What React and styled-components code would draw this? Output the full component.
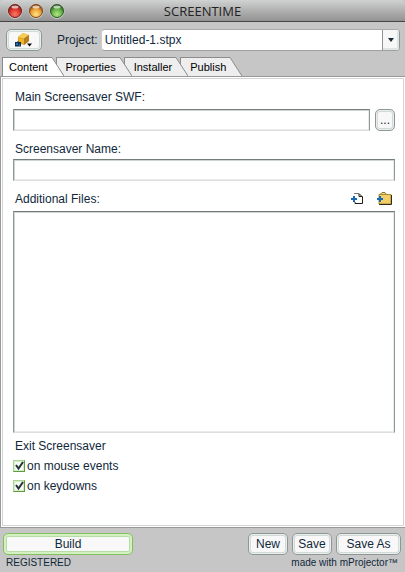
import React, { useState } from 'react';
import styled, { createGlobalStyle, css } from 'styled-components';

const GlobalStyle = createGlobalStyle`
  * {
    box-sizing: border-box;
  }

  body {
    margin: 0;
    background-color: #c6c6c6;
    color: #10283a;
    font-family: 'Liberation Sans', Arial, sans-serif;
    font-size: 12px;
    line-height: 16px;
  }

  button, input, select {
    font: inherit;
    color: inherit;
  }
`;

const Window = styled.main`
  display: flex;
  flex-direction: column;
  min-height: 100vh;
  background-color: #c6c6c6;
`;

const TitleBar = styled.header`
  display: grid;
  grid-template-columns: 1fr auto 1fr;
  align-items: center;
  height: 22px;
  padding: 0 7px;
  border-bottom: 1px solid #444;
  border-radius: 4px 4px 0 0;
  background: linear-gradient(#d0d3d2, #b4b4b4 45%, #929292);
`;

const Lights = styled.div`
  display: flex;
  gap: 5px;
`;

const Light = styled.button`
  display: flex;
  width: 16px;
  height: 16px;
  padding: 0;
  border: 0;
  background: none;
`;

const Title = styled.h1`
  margin: 0;
  color: #222;
  font-family: 'Open Sans', sans-serif;
  font-size: 13px;
  font-weight: 400;
  line-height: 20px;
`;

const Toolbar = styled.div`
  display: flex;
  align-items: center;
  height: 35px;
  padding: 0 5px 0 6px;
`;

const Button = styled.button`
  display: flex;
  align-items: center;
  justify-content: center;
  width: ${(props) => props.$width}px;
  height: 22px;
  padding: 0;
  border: 1px solid #8f9796;
  border-radius: 5px;
  background-color: #f8f8f8;
  box-shadow: inset 0 0 0 1px #e9edec, inset 0 0 0 2px #d3dbd9;

  ${(props) =>
    props.$primary &&
    css`
      border-color: #82bd60;
      box-shadow: inset 0 0 0 2px #d3f0c1, inset 0 0 0 3px #b9dba7;
    `}
`;

const ProjectLabel = styled.label`
  margin: 0 3px 0 15px;
`;

const Picker = styled.div`
  display: grid;
  grid-template-columns: 1fr 17px;
  flex: 1;
  height: 22px;
  border: 1px solid;
  border-color: #aaa #8f9594 #9da1a0 #ccc;
  border-radius: 4px;
  background: #fff;
  overflow: hidden;
`;

const ProjectSelect = styled.select`
  grid-area: 1 / 1 / 2 / 3;
  min-width: 0;
  padding: 0 20px 0 3px;
  border: 0;
  background: none;
  appearance: none;
`;

const PickerArrow = styled.span`
  display: flex;
  grid-area: 1 / 2 / 2 / 3;
  align-items: center;
  justify-content: center;
  border-left: 1px solid #8f9594;
  background: #f7f7f7;
  box-shadow: inset -1px -1px 0 1px #dfe5e3;
  pointer-events: none;
`;

const TabList = styled.div`
  display: flex;
  height: 19px;
  padding-left: 2px;
`;

const TabButton = styled.button`
  position: relative;
  z-index: ${(props) => props.$layer};
  display: flex;
  height: 19px;
  margin: 0 -8px 0 0;
  padding: 0;
  border: 0;
  background: none;
  color: #000;
  font-size: 11px;
`;

const TabText = styled.span`
  height: 19px;
  padding: 0 4px 0 ${(props) => (props.$first ? 6 : 9)}px;
  border: solid #8c8c8c;
  border-width: 1px 0 0 1px;
  background-color: ${(props) => (props.$active ? '#fff' : '#eee')};
  line-height: 18px;
`;

const Panel = styled.section`
  display: flex;
  flex: 1;
  flex-direction: column;
  padding: 1px;
  border: solid #999;
  border-width: 1px 0 1px 1px;
  background-color: #fff;
`;

const Form = styled.form`
  display: flex;
  flex: 1;
  flex-direction: column;
  padding: 10px 8px 29px 10px;
  border: 1px solid #d2d6d5;
`;

const FieldLabel = styled.label`
  padding: 0 2px;
`;

const FieldRow = styled.div`
  display: flex;
  gap: 5px;
  margin: ${(props) => (props.$tight ? 2 : 4)}px 0 10px;
`;

const sunken = css`
  border: 1px solid;
  border-color: #737d7a #8f9996 #dde0df #8f9996;
  border-radius: 0;
  background-color: #fff;
  box-shadow: inset 1px 1px 0 #cdd4d1, inset -1px -1px 0 #e8ebea;
  outline: 0;
`;

const TextInput = styled.input`
  flex: 1;
  min-width: 0;
  height: 22px;
  padding: 0 4px;
  ${sunken}
`;

const FilesHeader = styled.div`
  display: flex;
  align-items: center;
  justify-content: space-between;
  height: 16px;
  margin-bottom: 4px;
`;

const FileTools = styled.div`
  display: flex;
  gap: 12px;
  padding-right: 3px;
`;

const IconButton = styled.button`
  display: flex;
  padding: 0;
  border: 0;
  background: none;
`;

const FileList = styled.select`
  flex: 1;
  min-height: 120px;
  ${sunken}
`;

const ExitOptions = styled.fieldset`
  margin: 5px 0 0;
  padding: 0;
  border: 0;
`;

const Legend = styled.legend`
  padding: 0 2px 2px;
`;

const CheckLabel = styled.label`
  display: flex;
  align-items: center;
  gap: 2px;
  height: 20px;
`;

const CheckBox = styled.input`
  width: 12px;
  height: 12px;
  margin: 0;
  border: 1px solid;
  border-color: #a9d492 #5f9b42 #5f9b42 #a9d492;
  background-color: #f5faf2;
  box-shadow: inset 0 0 0 1px #d5ecc9;
  appearance: none;
`;

const CheckSlot = styled.span`
  display: grid;

  > * {
    grid-area: 1 / 1;
  }

  svg {
    display: none;
    pointer-events: none;
  }

  input:checked + svg {
    display: block;
  }
`;

const Footer = styled.footer`
  padding: 5px 4px 1px 3px;
`;

const Actions = styled.div`
  display: flex;
  justify-content: space-between;
`;

const ButtonGroup = styled.div`
  display: flex;
  gap: 4px;
`;

const Status = styled.div`
  display: flex;
  justify-content: space-between;
  padding: 0 3px;
  font-size: 10px;
`;

function LightIcon({ id, dark, color, glow }) {
  return (
    <svg width='16' height='16' viewBox='0 0 16 16'>
      <defs>
        <radialGradient id={id} cx='50%' cy='75%' r='70%'>
          <stop offset='0' stopColor={glow} />
          <stop offset='0.55' stopColor={color} />
          <stop offset='1' stopColor={dark} />
        </radialGradient>
      </defs>
      <circle cx='8' cy='8.5' r='7.5' fill='#c8c8c8' />
      <circle cx='8' cy='8' r='6.5' fill={`url(#${id})`} stroke={dark} />
      <ellipse cx='8' cy='4' rx='3.5' ry='1.5' fill='#fff' opacity='0.65' />
    </svg>
  );
}

function BoxIcon() {
  return (
    <svg width='20' height='16' viewBox='0 0 20 16'>
      <path d='M4 5L9 1L15 3V9L10 13L4 11Z' fill='#dba11d' />
      <path d='M4 5L9 1L15 3L10 6.5Z' fill='#f3cd57' />
      <path d='M10 6.5L15 3V9L10 13Z' fill='#b87d1b' />
      <path d='M5 6L10 7.5V12L5 10.5Z' fill='#efb62c' />
      <path d='M1 10H3L4 9L5 10H7V14.5H1Z' fill='#12324f' />
      <path d='M2 11H4V13H2Z' fill='#2c71ad' />
      <path d='M5 12H6V14H5Z' fill='#2c71ad' />
      <path d='M13 11.5H18L15.5 14.5Z' fill='#000' />
    </svg>
  );
}

function AddFileIcon() {
  return (
    <svg width='14' height='14' viewBox='0 0 14 14'>
      <path d='M4.5 1.5H9L12.5 5V12.5H4.5Z' fill='#fff' />
      <path d='M4 1.5H9' fill='none' stroke='#777' />
      <path d='M9 1.5L11.5 4V5M9 2V4.5H12.5V11.5H5V10' fill='none' stroke='#1c1c1c' />
      <path d='M1 7H7M4 4V10' stroke='#176ab3' strokeWidth='2' />
    </svg>
  );
}

function AddFolderIcon() {
  return (
    <svg width='16' height='14' viewBox='0 0 16 14'>
      <path d='M4.5 3V2L6 0.5H9L10.5 2.5' fill='#f2dc89' stroke='#8b7434' />
      <path d='M3 2.5H15V12H3Z' fill='#f1cf66' stroke='#a98834' />
      <path d='M3 12.5H15.5V3' fill='none' stroke='#302a18' />
      <path d='M1 7H7M4 4V10' stroke='#176ab3' strokeWidth='2' />
    </svg>
  );
}

function Tab({ label, first, active, layer, onClick }) {
  return (
    <TabButton
      type='button'
      role='tab'
      aria-selected={active}
      $layer={layer}
      onClick={onClick}
    >
      <TabText $first={first} $active={active}>
        {label}
      </TabText>
      <svg width='12' height='19' viewBox='0 0 12 19'>
        <path d='M0 0.5L12 19H0Z' fill={active ? '#fff' : '#eee'} />
        <path d='M0 0.5L12 19' stroke='#8c8c8c' />
      </svg>
    </TabButton>
  );
}

function Check({ children }) {
  return (
    <CheckLabel>
      <CheckSlot>
        <CheckBox type='checkbox' defaultChecked />
        <svg width='12' height='12' viewBox='0 0 12 12'>
          <path d='M3 5L5.5 8.5L10 2' fill='none' stroke='#26303c' strokeWidth='2' />
        </svg>
      </CheckSlot>
      {children}
    </CheckLabel>
  );
}

const tabs = ['Content', 'Properties', 'Installer', 'Publish'];

export default function App() {
  const [tab, setTab] = useState('Content');

  return (
    <Window>
      <GlobalStyle />
      <TitleBar>
        <Lights>
          <Light aria-label='Close'>
            <LightIcon id='close' dark='#722018' color='#e5352f' glow='#f08068' />
          </Light>
          <Light aria-label='Minimize'>
            <LightIcon id='minimize' dark='#854516' color='#eda33c' glow='#fce785' />
          </Light>
          <Light aria-label='Zoom'>
            <LightIcon id='zoom' dark='#2c5a22' color='#68b54a' glow='#b4e684' />
          </Light>
        </Lights>
        <Title>SCREENTIME</Title>
      </TitleBar>

      <Toolbar>
        <Button type='button' $width={36} aria-label='Project menu'>
          <BoxIcon />
        </Button>
        <ProjectLabel htmlFor='project'>Project:</ProjectLabel>
        <Picker>
          <ProjectSelect id='project'>
            <option>Untitled-1.stpx</option>
          </ProjectSelect>
          <PickerArrow>
            <svg width='6' height='4' viewBox='0 0 6 4'>
              <path d='M0 0H6L3 4Z' fill='#1c2b36' />
            </svg>
          </PickerArrow>
        </Picker>
      </Toolbar>

      <TabList role='tablist'>
        {tabs.map((name, i) => (
          <Tab
            key={name}
            label={name}
            first={i === 0}
            active={tab === name}
            layer={tabs.length - i}
            onClick={() => setTab(name)}
          />
        ))}
      </TabList>

      <Panel>
        <Form>
          <FieldLabel htmlFor='swf'>Main Screensaver SWF:</FieldLabel>
          <FieldRow>
            <TextInput id='swf' type='text' />
            <Button type='button' $width={20} aria-label='Browse'>
              ...
            </Button>
          </FieldRow>
          <FieldLabel htmlFor='name'>Screensaver Name:</FieldLabel>
          <FieldRow $tight>
            <TextInput id='name' type='text' />
          </FieldRow>
          <FilesHeader>
            <FieldLabel htmlFor='files'>Additional Files:</FieldLabel>
            <FileTools>
              <IconButton type='button' aria-label='Add file'>
                <AddFileIcon />
              </IconButton>
              <IconButton type='button' aria-label='Add folder'>
                <AddFolderIcon />
              </IconButton>
            </FileTools>
          </FilesHeader>
          <FileList id='files' multiple />
          <ExitOptions>
            <Legend>Exit Screensaver</Legend>
            <Check>on mouse events</Check>
            <Check>on keydowns</Check>
          </ExitOptions>
        </Form>
      </Panel>

      <Footer>
        <Actions>
          <Button type='button' $width={130} $primary>
            Build
          </Button>
          <ButtonGroup>
            <Button type='button' $width={40}>
              New
            </Button>
            <Button type='button' $width={40}>
              Save
            </Button>
            <Button type='button' $width={65}>
              Save As
            </Button>
          </ButtonGroup>
        </Actions>
        <Status>
          <span>REGISTERED</span>
          <span>made with mProjector™</span>
        </Status>
      </Footer>
    </Window>
  );
}
